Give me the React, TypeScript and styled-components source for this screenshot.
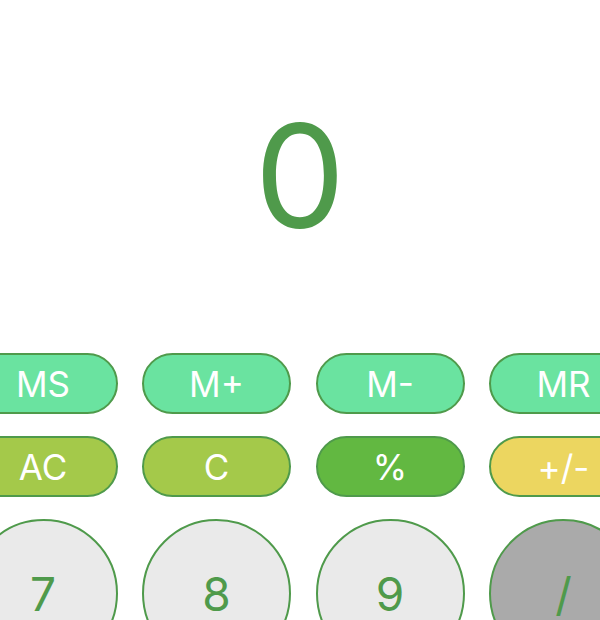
import React, { useState } from 'react';
import styled, { createGlobalStyle } from 'styled-components';

const GlobalStyle = createGlobalStyle`
    html, body {
        margin: 0;
        padding: 0;
        background: #ffffff;
        overflow: hidden;
    }
    body {
        font-family: Inter, "Liberation Sans", sans-serif;
    }
`;

const Page = styled.div`
    width: 600px;
    height: 620px;
    overflow: hidden;
`;

const Display = styled.div`
    height: 351px;
    margin-bottom: 2px;
    display: flex;
    align-items: center;
    justify-content: center;
    color: #4f9a4b;
    font-size: 144px;
    font-weight: 400;
    line-height: 1;
`;

const Keypad = styled.div`
    display: grid;
    grid-template-columns: repeat(4, 149px);
    column-gap: 24.5px;
    row-gap: 22px;
    margin-left: -31.5px;
    width: max-content;
`;

const Key = styled.button<{ $bg: string; $fg?: string; $round?: boolean }>`
    box-sizing: border-box;
    width: 149px;
    height: ${props => (props.$round ? '149px' : '61px')};
    border-radius: ${props => (props.$round ? '50%' : '31px')};
    border: 2px solid #4f9a4b;
    background: ${props => props.$bg};
    color: ${props => props.$fg || '#ffffff'};
    font-family: Inter, "Liberation Sans", sans-serif;
    font-size: ${props => (props.$round ? '46px' : '35px')};
    font-weight: 400;
    padding: 0;
    display: flex;
    align-items: center;
    justify-content: center;
    cursor: pointer;
`;

const MEM = '#6ae3a0';
const CLEAR = '#a4c94a';
const PCT = '#62b841';
const SIGN = '#ecd660';
const DIGIT = '#eaeaea';
const OP = '#aaaaaa';

const keys: { label: string; bg: string; fg?: string; round?: boolean }[] = [
    { label: 'MS', bg: MEM },
    { label: 'M+', bg: MEM },
    { label: 'M-', bg: MEM },
    { label: 'MR', bg: MEM },
    { label: 'AC', bg: CLEAR },
    { label: 'C', bg: CLEAR },
    { label: '%', bg: PCT },
    { label: '+/-', bg: SIGN },
    { label: '7', bg: DIGIT, fg: '#4f9a4b', round: true },
    { label: '8', bg: DIGIT, fg: '#4f9a4b', round: true },
    { label: '9', bg: DIGIT, fg: '#4f9a4b', round: true },
    { label: '/', bg: OP, fg: '#4f9a4b', round: true },
];

const App: React.FC = () => {
    const [value] = useState('0');

    return (
        <Page>
            <GlobalStyle />
            <Display>{value}</Display>
            <Keypad>
                {keys.map(k => (
                    <Key key={k.label} $bg={k.bg} $fg={k.fg} $round={k.round}>
                        {k.label}
                    </Key>
                ))}
            </Keypad>
        </Page>
    );
};

export default App;
